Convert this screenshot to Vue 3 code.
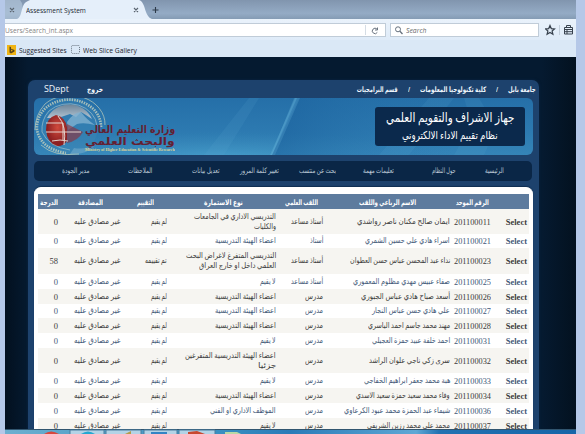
<script setup>
// Sets a label to a known width, whatever font ends up drawing it.
const vFit = {
  mounted(el, { value }) {
    const inner = el.firstElementChild
    el.style.width = value + 'px'
    inner.style.transform = `scaleX(${value / inner.offsetWidth})`
  }
}

const crumbs = [
  ['جامعة بابل', 28], ['/', 2], ['كلية تكنولوجيا المعلومات', 66], ['/', 2], ['قسم البرامجيات', 41]
]
const menu = [
  ['الرئيسية', 19], ['حول النظام', 24], ['تعليمات مهمة', 31], ['بحث عن منتسب', 37],
  ['تغيير كلمة المرور', 39], ['تعديل بيانات', 27], ['الملاحظات', 24], ['مدير الجودة', 27]
]
const heads = [
  ['الرقم الموحد', 33], ['الاسم الرباعي واللقب', 57], ['اللقب العلمي', 33], ['نوع الاستمارة', 39],
  ['التقييم', 17], ['المصادقة', 25], ['الدرجة', 18]
]

const assistant = ['أستاذ مساعد', 32]
const lecturer = ['مدرس', 18]
const staff = [['اعضاء الهيئة التدريسية', 61]]
const none = [['لا يقيم', 16]]
const pending = ['لم يقيم', 16]
const done = ['تم تقييمه', 22]

const rows = [
  { h: 25, id: '201100011', name: ['ايمان صالح مكنان ناصر رواشدي', 93], title: assistant, type: [['التدريسي الاداري في الجامعات', 82], ['والكليات', 22]], state: pending, grade: 0 },
  { h: 14, id: '201100021', name: ['اسراء هادي علي حسين الشمري', 85], title: ['أستاذ', 13], type: staff, state: pending, grade: 0 },
  { h: 26, id: '201100023', name: ['نداء عبد المحسن عباس حسن العطوان', 100], title: assistant, type: [['التدريسي المتفرغ لاغراض البحث', 90], ['العلمي داخل او خارج العراق', 77]], state: done, grade: 58 },
  { h: 15, id: '201100025', name: ['صفاء عبيس مهدي مظلوم المعموري', 97], title: assistant, type: none, state: pending, grade: 0 },
  { h: 15, id: '201100026', name: ['أسعد صباح هادي عباس الجبوري', 89], title: lecturer, type: staff, state: pending, grade: 0 },
  { h: 14, id: '201100027', name: ['علي هادي حسن عباس النجار', 78], title: lecturer, type: staff, state: pending, grade: 0 },
  { h: 15, id: '201100028', name: ['مهند محمد جاسم احمد الياسري', 82], title: lecturer, type: staff, state: pending, grade: 0 },
  { h: 15, id: '201100031', name: ['احمد خلفة عبيد حمزة العجيلي', 78], title: lecturer, type: none, state: pending, grade: 0 },
  { h: 25, id: '201100032', name: ['سرى زكي ناجي علوان الراشد', 81], title: lecturer, type: [['اعضاء الهيئة التدريسية المتفرغين', 91], ['جزئيا', 18]], state: pending, grade: 0 },
  { h: 15, id: '201100033', name: ['هبة محمد جعفر ابراهيم الخفاجي', 86], title: lecturer, type: none, state: pending, grade: 0 },
  { h: 15, id: '201100034', name: ['وفاء محمد سعيد حمزة سعيد الاسدي', 94], title: lecturer, type: staff, state: pending, grade: 0 },
  { h: 15, id: '201100036', name: ['شيماء عبد الحمزة محمد عبود الكرعاوي', 106], title: lecturer, type: [['الموظف الاداري او الفني', 66]], state: pending, grade: 0 },
  { h: 15, id: '201100037', name: ['محمد علي محمد رزين الشريفي', 83], title: lecturer, type: none, state: pending, grade: 0 }
]
</script>

<template>
  <div class="screen">
    <div class="window">
      <div class="tabs">
        <svg class="tabshape" width="160" height="19" viewBox="0 0 160 19">
          <path d="M0 0H15Q20 5 15 17L13 19H0Z" fill="#b4c7dc" opacity=".65" />
          <path d="M12 19C18 17 15 4 23 1L25 0H134C141 2 139 16 147 19Z" fill="#e5effa" />
          <g stroke="#5b6570" stroke-width="1.1" fill="none">
            <path d="M5 8l4 4m0-4l-4 4M129 8l4 4m0-4l-4 4" />
            <path d="M147.500 10h6M150.500 7v6" stroke="#2d3a49" />
          </g>
        </svg>
        <span class="fit tabtitle" v-fit="60"><span>Assessment System</span></span>
      </div>
      <div class="nav">
        <div class="address">
          <span class="fit" v-fit="68"><span>Users/Search_int.aspx</span></span>
          <span class="reload">
            <svg width="8" height="8" viewBox="0 0 8 8"><path d="M6.300 5.400A2.700 2.700 0 1 1 6 2.100M6.500 .5V3H4" fill="none" stroke="#6a7480" /></svg>
          </span>
        </div>
        <div class="search">
          <svg width="8" height="9" viewBox="0 0 8 9"><circle cx="3" cy="3.300" r="2.500" fill="none" stroke="#66717d" /><path d="M4.900 5.300L7.500 8" stroke="#66717d" stroke-width="1.300" /></svg>
          <span class="fit" v-fit="20"><span>Search</span></span>
        </div>
        <svg class="tools" width="30" height="12" viewBox="0 0 30 12">
          <path d="M5 1.500L6.300 4.600L9.500 4.900L7.100 7L7.900 10.300L5 8.500L2.100 10.300L2.900 7L.5 4.900L3.700 4.600Z" fill="none" stroke="#38424e" stroke-width="1.200" />
          <path d="M14.500 1V11" stroke="#c3cfdc" />
          <path d="M19.500 3.500H27.500V10H19.500ZM21.500 3V1.500H25.500V3M20 5.500H27M20 7.700H27M22 5V10" fill="none" stroke="#38424e" stroke-width="1" />
        </svg>
      </div>
      <div class="bookmarks">
        <svg class="bing" width="9" height="10" viewBox="0 0 9 10"><rect width="9" height="10" fill="#f0b414" /><path d="M2.500 1.500L4 2V6.500L6 5.700L4.300 4.900L4 3.800L7.500 5V6.500L4 8.600L2.500 7.600Z" fill="#5b4517" /></svg>
        <span class="fit" v-fit="48"><span>Suggested Sites</span></span>
        <svg class="slice" width="9" height="9" viewBox="0 0 9 9"><rect x=".5" y=".5" width="8" height="8" rx="1" fill="none" stroke="#68737f" stroke-dasharray="1 1" /></svg>
        <span class="fit" v-fit="54"><span>Web Slice Gallery</span></span>
      </div>

      <div class="page">
        <div class="panel">
          <div class="top" dir="rtl">
            <span v-for="(c, i) in crumbs" :key="i" class="fit" v-fit="c[1]"><span>{{ c[0] }}</span></span>
            <span class="fit exit" v-fit="16"><span>خروج</span></span>
            <span class="fit user" v-fit="25"><span>SDept</span></span>
          </div>

          <div class="banner" dir="rtl">
            <svg class="rays" width="499" height="57" viewBox="0 0 499 57">
              <defs>
                <radialGradient id="glow" cx="38%" cy="105%" r="45%"><stop offset="0" stop-color="#4ba6d0" stop-opacity=".75" /><stop offset="1" stop-color="#3989bc" stop-opacity="0" /></radialGradient>
                <linearGradient id="deep" x1="0" x2="1"><stop offset="0" stop-color="#1a609c" stop-opacity=".65" /><stop offset="1" stop-color="#2b78b0" stop-opacity="0" /></linearGradient>
                <linearGradient id="dome" x1="0" y1="0" x2="0" y2="1"><stop offset="0" stop-color="#6d8498" /><stop offset="1" stop-color="#b4c6d4" /></linearGradient>
                <radialGradient id="globe" cx="55%" cy="40%"><stop offset="0" stop-color="#d04a3c" /><stop offset="1" stop-color="#8c2022" /></radialGradient>
              </defs>
              <rect width="499" height="57" fill="url(#glow)" />
              <path d="M265 0H420V57H238Z" fill="url(#deep)" />
              <path d="M261 0H263L238 57H236Z" fill="#66b4da" opacity=".35" />
              <path d="M260 0H266L241 57H237Z" fill="#66b4da" opacity=".25" />
              <path d="M215 0H225L190 57H170ZM345 57L395 0H420L375 57ZM420 57Q440 25 430 0H445Q465 30 450 57Z" fill="#5fb0d6" opacity=".12" />
              <circle cx="36" cy="29" r="28" fill="#3f86b4" opacity=".4" />
              <path d="M13 20A25 25 0 0 1 58 21L52 17L47 14L42 19L36 16L24 20Z" fill="url(#dome)" />
              <path d="M33 24Q40 14 47 14Q53 22 61 27Q50 24 43 26L34 32Z" fill="#7fb0d0" opacity=".8" />
              <path d="M36 56Q54 57 62 46Q51 52 40 50Z" fill="#9cc4da" opacity=".35" />
              <path d="M12 32Q12 20 22 17Q31 19 33 29L33 43Q29 49 22 48Q13 44 12 32Z" fill="url(#globe)" />
              <path d="M33 26L49 34Q44 43 33 45Z" fill="#8c3341" opacity=".65" />
              <path d="M12 25H29V42M12 34H47M18 43Q26 41 34 43M24 18Q33 28 30 47" fill="none" stroke="#e4d2cc" stroke-width="1" />
              <path d="M67 29A32 27 0 0 0 13 9Q2 18 3 32Q7 51 32 55" fill="none" stroke="#d7dcc0" stroke-width="2.700" stroke-dasharray="1.500 1" opacity=".7" />
              <path d="M71 27A35 29 0 0 0 11 6Q1 17 1 32M7 47Q20 59 45 56" fill="none" stroke="#dcddbc" stroke-width=".6" />
              <path d="M63 28A28 24 0 0 0 15 13Q7 22 8 34Q15 49 36 52" fill="none" stroke="#cbd9d7" stroke-width=".5" />
            </svg>
            <div class="titlebox">
              <span class="fit t1" v-fit="128"><span>جهاز الاشراف والتقويم العلمي</span></span>
              <span class="fit t2" v-fit="96"><span>نظام تقييم الاداء الالكتروني</span></span>
            </div>
            <div class="ministry">
              <span class="fit" v-fit="90"><span>وزارة التعليم العالي</span></span>
              <span class="fit" v-fit="90"><span>والبحث العلمي</span></span>
              <span class="fit en" v-fit="90"><span dir="ltr">Ministry of Higher Education &amp; Scientific Research</span></span>
            </div>
          </div>

          <div class="menu" dir="rtl">
            <span v-for="m in menu" :key="m[0]"><span class="fit" v-fit="m[1]"><span>{{ m[0] }}</span></span></span>
          </div>

          <div class="sheet" dir="rtl">
            <div class="head">
              <span></span>
              <span v-for="h in heads" :key="h[0]"><span class="fit" v-fit="h[1]"><span>{{ h[0] }}</span></span></span>
            </div>
            <div v-for="(r, i) in rows" :key="r.id" class="row" :class="{ alt: i % 2 === 0 }" :style="{ height: r.h + 'px' }">
              <b class="select"><span class="fit" v-fit="21"><span>Select</span></span></b>
              <span class="num"><span class="fit" v-fit="37"><span>{{ r.id }}</span></span></span>
              <span><span class="fit" v-fit="r.name[1]"><span>{{ r.name[0] }}</span></span></span>
              <span><span class="fit" v-fit="r.title[1]"><span>{{ r.title[0] }}</span></span></span>
              <span class="lines"><span v-for="t in r.type" :key="t[0]" class="fit" v-fit="t[1]"><span>{{ t[0] }}</span></span></span>
              <span><span class="fit" v-fit="r.state[1]"><span>{{ r.state[0] }}</span></span></span>
              <span><span class="fit" v-fit="47"><span>غير مصادق عليه</span></span></span>
              <span class="grade">{{ r.grade }}</span>
            </div>
          </div>
        </div>
      </div>
    </div>

    <svg class="taskbar" width="571" height="5" viewBox="0 0 571 5">
      <defs>
        <linearGradient id="bar" x1="0" x2="1"><stop offset="0" stop-color="#6cafcf" /><stop offset=".38" stop-color="#388fc1" /><stop offset=".5" stop-color="#2a7bb8" /><stop offset=".72" stop-color="#5fa8d5" /><stop offset=".76" stop-color="#2272b2" /><stop offset="1" stop-color="#1665a8" /></linearGradient>
      </defs>
      <rect width="571" height="5" fill="url(#bar)" />
      <path d="M0 .5H571" stroke="#31556f" />
      <path d="M65 5V1H99V5M101 5V1H136V5M139 5V1H172V5M174 5V1H210V5" fill="#b3d3e6" stroke="#4a7c9c" />
      <path d="M39 5Q46 0 54 5Z" fill="#d8473d" />
      <path d="M76 5Q83 0 90 5Z" fill="#23a8d1" />
      <path d="M120 5L126 2V5Z" fill="#b59b4b" />
      <path d="M146 3H162V5H146Z" fill="#3384c4" />
      <path d="M183 3L192 2L200 5H183Z" fill="#c84830" />
      <path d="M220 3H232L236 5H220Z" fill="#b8d9a5" />
    </svg>
  </div>
</template>

<style>
body { margin: 0; overflow: hidden; }
</style>

<style scoped>
.screen {
  position: relative; box-sizing: border-box; width: 585px; height: 434px; overflow: hidden;
  padding: 0 9px 0 5px; background: #b5c8e8;
  font-family: "Open Sans", "DejaVu Sans", sans-serif; font-size: 7.500px; line-height: 10px;
}
.window { height: 434px; overflow: hidden; background: #dce9f7; opacity: .999; }
.fit { display: inline-block; white-space: nowrap; flex: none; text-align: start; }
.fit > span { display: inline-block; transform-origin: left center; }
[dir="rtl"] .fit > span { transform-origin: right center; }

.tabs { display: flex; height: 19px; background: linear-gradient(#8195ae, #94abc5 70%, #849bb4); }
.tabshape { flex: none; }
.tabtitle { margin: 5px 0 0 -139px; color: #222a33; }
.nav { display: flex; height: 21px; padding-top: 4px; box-sizing: border-box; background: linear-gradient(#e9f2fb, #dfebf8); }
.address { display: flex; justify-content: space-between; box-sizing: border-box; width: 381px; height: 14px; padding-top: 1px; background: #fff; border: 1px solid #c0ccd8; border-left: 0; color: #858585; }
.reload { width: 14px; padding-left: 5px; border-left: 1px solid #d5dde5; height: 10px; }
.reload svg { display: block; margin-top: 2px; }
.search { display: flex; gap: 3px; box-sizing: border-box; width: 149px; height: 14px; margin-left: 4px; padding: 1px 4px; background: #fff; border: 1px solid #c0ccd8; color: #6a6a6a; font-style: italic; }
.search svg { margin-top: 1px; }
.tools { margin: 1px 0 0 6px; }
.bookmarks { display: flex; align-items: center; height: 17px; padding: 2px 0 0 2px; box-sizing: border-box; background: #dae8f6; color: #1d252d; }
.bing { margin-right: 3px; }
.slice { margin: 0 3px 0 4px; }

.page { height: 377px; box-sizing: border-box; padding: 23px 37px 0 23px; background: linear-gradient(90deg, #03101f, #051a30 4%, #051a30 94%, #03111f); }
.panel { height: 354px; box-sizing: border-box; padding: 0 6px; background: #1d426d; border-radius: 7px 7px 0 0; box-shadow: 0 0 3px #0b2745; }
.top { display: flex; align-items: center; height: 18px; margin-right: -3px; gap: 10px; color: #eef5fb; font-weight: bold; font-size: 7.500px; }
.exit { margin-right: auto; }
.user { margin: 0 8px 0 10px; font-weight: normal; font-size: 8.500px; }

.banner { position: relative; display: flex; justify-content: space-between; box-sizing: border-box; height: 57px; padding: 9px 8px 0 0; border-radius: 6px; overflow: hidden; background: linear-gradient(#256fa8, #2c79b0 55%, #3585b8); }
.rays { position: absolute; left: 0; top: 0; }
.titlebox { position: relative; display: flex; flex-direction: column; align-items: center; box-sizing: border-box; width: 150px; height: 39px; padding-top: 1px; border-radius: 3px; background: #0b294c; color: #fff; }
.t1 { font-size: 13px; line-height: 18px; }
.t2 { font-size: 11px; line-height: 18px; }
.ministry { position: relative; display: flex; flex-direction: column; margin: 17px 0 0 51px; width: 90px; color: #641f32; font-weight: bold; font-size: 11px; line-height: 12px; font-family: "DejaVu Sans", sans-serif; }
.ministry .en { font-family: "Liberation Serif", serif; font-size: 5px; line-height: 6px; margin-top: -1px; color: #ded596; }

.menu { display: grid; grid-template-columns: 48px 62px 58px 57px 60px 67px 63px 1fr; box-sizing: border-box; height: 20px; margin: 6px 1px 6px 0; padding: 4px 28px 0 0; border-radius: 5px; background: #0a2646; color: #bdcad7; font-size: 7.500px; }

.sheet { height: 246px; box-sizing: border-box; padding: 6px 4px 0; border-top: 1px solid #fff; border-radius: 7px 7px 0 0; background: #fff; box-shadow: 0 -1px 1px #102f52; }
.head { display: grid; grid-template-columns: 40px 73px 98px 75px 89px 51px 45px 20px; height: 15px; align-items: center; background: #5d7b9e; color: #fff; font-weight: bold; font-size: 7.500px; }
.row { display: grid; grid-template-columns: 38px 41px 127px 47px 109px 46px 51px 32px; align-items: center; color: #425877; font-family: "Liberation Serif", "DejaVu Sans", serif; font-size: 8px; }
.row.alt { background: #f6f5f1; color: #3b3b3b; }
.select { padding-right: 2px; font-size: 8.500px; }
.num { font-size: 8.500px; }
.lines { display: flex; flex-direction: column; align-items: flex-start; }
.grade { padding-right: 12px; font-size: 8.500px; }

.taskbar { position: absolute; left: 5px; top: 429px; display: block; }
</style>
